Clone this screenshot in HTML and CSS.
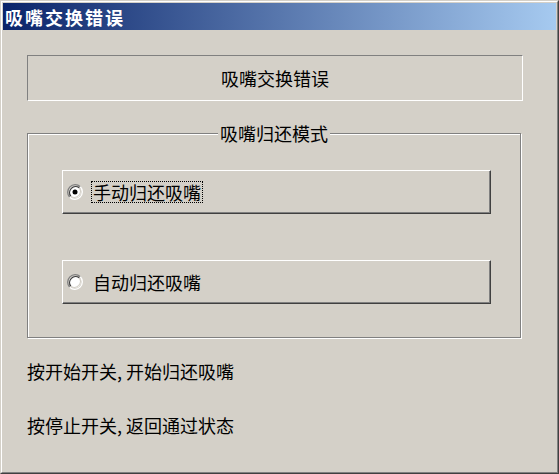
FILE: index.html
```html
<!DOCTYPE html>
<html lang="zh-CN">
<head>
<meta charset="utf-8">
<title>吸嘴交换错误</title>
<link rel="stylesheet" href="styles.css">
</head>
<body>
<div class="window">
  <div class="frame">
    <div class="titlebar"><span class="title">吸嘴交换错误</span></div>
    <div class="client">
      <div class="status">吸嘴交换错误</div>
      <fieldset class="group">
        <legend class="legend">吸嘴归还模式</legend>
        <div class="option">
          <svg class="radio" width="16" height="16" viewBox="0 0 16 16">
            <path d="M13.3 2.7A7.5 7.5 0 0 0 2.7 13.3" fill="none" stroke="#808080" stroke-width="1.3"/>
            <path d="M2.7 13.3A7.5 7.5 0 0 0 13.3 2.7" fill="none" stroke="#ffffff" stroke-width="1.3"/>
            <circle cx="8" cy="8" r="6" fill="#ffffff"/>
            <path d="M12.2 3.8A6 6 0 0 0 3.8 12.2" fill="none" stroke="#404040" stroke-width="1.3"/>
            <path d="M3.8 12.2A6 6 0 0 0 12.2 3.8" fill="none" stroke="#d4d0c8" stroke-width="1.3"/>
            <circle cx="8" cy="8" r="2.5" fill="#000000"/>
          </svg>
          <span class="label focused">手动归还吸嘴</span>
        </div>
        <div class="option second">
          <svg class="radio" width="16" height="16" viewBox="0 0 16 16">
            <path d="M13.3 2.7A7.5 7.5 0 0 0 2.7 13.3" fill="none" stroke="#808080" stroke-width="1.3"/>
            <path d="M2.7 13.3A7.5 7.5 0 0 0 13.3 2.7" fill="none" stroke="#ffffff" stroke-width="1.3"/>
            <circle cx="8" cy="8" r="6" fill="#ffffff"/>
            <path d="M12.2 3.8A6 6 0 0 0 3.8 12.2" fill="none" stroke="#404040" stroke-width="1.3"/>
            <path d="M3.8 12.2A6 6 0 0 0 12.2 3.8" fill="none" stroke="#d4d0c8" stroke-width="1.3"/>
          </svg>
          <span class="label">自动归还吸嘴</span>
        </div>
      </fieldset>
      <p class="hint first">按开始开关, 开始归还吸嘴</p>
      <p class="hint">按停止开关, 返回通过状态</p>
    </div>
  </div>
</div>
</body>
</html>
```

FILE: styles.css
```css
html, body {
  margin: 0;
  padding: 0;
  background: #d4d0c8;
}

body {
  font-family: "Noto Sans CJK SC", "Noto Sans", sans-serif;
  font-size: 18px;
  color: #000;
}

.window {
  width: 559px;
  height: 474px;
  box-sizing: border-box;
  border: 1px solid;
  border-color: #d4d0c8 #404040 #404040 #d4d0c8;
  background: #d4d0c8;
}

.frame {
  height: 100%;
  box-sizing: border-box;
  border: 1px solid;
  border-color: #ffffff #808080 #808080 #ffffff;
  padding: 1px;
  display: flex;
  flex-direction: column;
}

.titlebar {
  height: 27px;
  flex: none;
  background: linear-gradient(to right, #0a246a, #a6caf0);
  display: flex;
  align-items: center;
  padding-left: 2px;
}

.title {
  color: #fff;
  font-weight: bold;
  font-size: 18px;
  letter-spacing: 2px;
  line-height: 22px;
}

.client {
  padding: 25px 0 0 24px;
}

.status {
  width: 496px;
  height: 46px;
  box-sizing: border-box;
  border: 1px solid;
  border-color: #808080 #ffffff #ffffff #808080;
  display: flex;
  align-items: center;
  justify-content: center;
  line-height: 22px;
}

.group {
  margin: 21px 0 0 0;
  width: 494px;
  box-sizing: border-box;
  border: 1px solid #808080;
  box-shadow: 1px 1px 0 #ffffff, inset 1px 1px 0 #ffffff;
  padding: 26px 0 33px 0;
  min-width: 0;
}

.legend {
  margin: 0 auto;
  padding: 0 2px;
  line-height: 22px;
  background: #d4d0c8;
}

.option {
  width: 429px;
  height: 44px;
  margin-left: 34px;
  box-sizing: border-box;
  border: 1px solid;
  border-color: #ffffff #404040 #404040 #ffffff;
  box-shadow: inset -1px -1px 0 #808080;
  display: flex;
  align-items: center;
  padding-left: 4px;
}

.option.second {
  margin-top: 46px;
}

.radio {
  flex: none;
  margin: 0 8px 0 0;
}

.label {
  line-height: 20px;
  padding: 0 1px;
  border: 1px solid transparent;
}

.label.focused {
  border: 1px dotted #000;
}

.hint {
  margin: 22px 0 0 0;
  line-height: 22px;
}

.hint + .hint {
  margin-top: 32px;
}
```
